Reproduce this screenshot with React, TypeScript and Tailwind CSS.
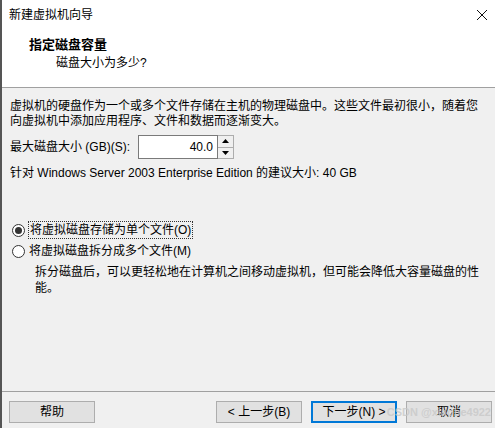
import React from 'react';

const font = { fontFamily: '"Liberation Sans", "Noto Sans CJK SC", sans-serif' };

function Radio({ checked }: { checked?: boolean }) {
  return (
    <span className="flex h-[13px] w-[13px] items-center justify-center rounded-full border border-[#333] bg-white">
      {checked && <span className="h-[7px] w-[7px] rounded-full bg-[#333]" />}
    </span>
  );
}

function Button({ children, primary }: { children: React.ReactNode; primary?: boolean }) {
  return (
    <button
      type="button"
      className={`flex h-[22px] w-[86px] items-center justify-center bg-[#e1e1e1] text-[12px] text-black ${
        primary ? 'border-2 border-[#0078d7]' : 'border border-[#adadad]'
      }`}
    >
      {children}
    </button>
  );
}

export default function App() {
  return (
    <div className="flex h-[428px] w-[495px] flex-col border-l-2 border-[#555] bg-[#f0f0f0] text-[12px] text-black" style={font}>
      {/* title + header */}
      <div className="flex h-[87px] flex-col bg-white">
        <div className="flex h-[30px] items-center justify-between pl-[7px] pr-[6px]">
          <span>新建虚拟机向导</span>
          <svg width="12" height="12" viewBox="0 0 12 12" className="mr-[1px]">
            <path d="M1 1 L11 11 M11 1 L1 11" stroke="#111" strokeWidth="1" />
          </svg>
        </div>
        <div className="pl-[27px] pt-[6px] text-[13px] font-bold leading-[18px]">指定磁盘容量</div>
        <div className="pl-[54px] leading-[18px]">磁盘大小为多少?</div>
      </div>
      <div className="h-px bg-[#a0a0a0]" />

      {/* body */}
      <div className="flex flex-1 flex-col pl-[8px]">
        <p className="mt-[11px] leading-[15px]">
          虚拟机的硬盘作为一个或多个文件存储在主机的物理磁盘中。这些文件最初很小，随着您
          <br />
          向虚拟机中添加应用程序、文件和数据而逐渐变大。
        </p>

        <div className="mt-[6px] flex items-center">
          <span className="w-[128px]">最大磁盘大小 (GB)(S):</span>
          <div className="flex h-[24px] w-[80px] items-center justify-end border border-[#7a7a7a] bg-white pr-[4px]">
            40.0
          </div>
          <div className="flex h-[24px] w-[16px] flex-col border border-l-0 border-[#adadad] bg-[#f0f0f0]">
            <div className="flex flex-1 items-center justify-center border-b border-[#adadad]">
              <svg width="7" height="4" viewBox="0 0 7 4"><path d="M0 4 L3.5 0 L7 4 Z" fill="#000" /></svg>
            </div>
            <div className="flex flex-1 items-center justify-center">
              <svg width="7" height="4" viewBox="0 0 7 4"><path d="M0 0 L3.5 4 L7 0 Z" fill="#000" /></svg>
            </div>
          </div>
        </div>

        <p className="mt-[7px] leading-[15px]">针对 Windows Server 2003 Enterprise Edition 的建议大小: 40 GB</p>

        <div className="mt-[40px] flex items-center gap-[3px] pl-[2px]">
          <Radio checked />
          <span className="border border-dotted border-[#333] px-px leading-[16px]">将虚拟磁盘存储为单个文件(O)</span>
        </div>
        <div className="mt-[4px] flex items-center gap-[4px] pl-[2px]">
          <Radio />
          <span className="leading-[16px]">将虚拟磁盘拆分成多个文件(M)</span>
        </div>
        <p className="mt-[5px] pl-[25px] leading-[16px]">
          拆分磁盘后，可以更轻松地在计算机之间移动虚拟机，但可能会降低大容量磁盘的性
          <br />
          能。
        </p>
      </div>

      {/* footer */}
      <div className="h-px bg-[#a0a0a0]" />
      <div className="relative flex h-[36px] items-start pl-[7px] pt-[9px]">
        <Button>帮助</Button>
        <div className="ml-auto flex gap-[9px] pr-[3px]">
          <Button>&lt; 上一步(B)</Button>
          <Button primary>下一步(N) &gt;</Button>
          <Button>取消</Button>
        </div>
        <span className="absolute right-[4px] top-[14px] text-[11px] font-bold leading-[12px] text-[#c8c8c8]/80">CSDN @xiaobe4922</span>
      </div>
    </div>
  );
}
